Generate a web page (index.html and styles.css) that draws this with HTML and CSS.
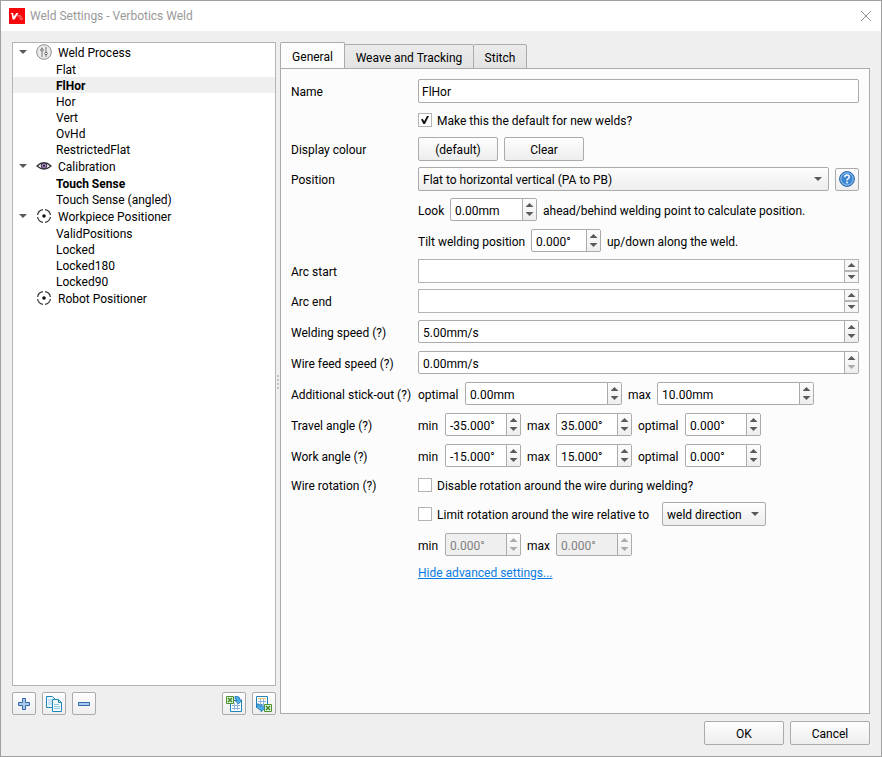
FILE: index.html
```
<!DOCTYPE html>
<html lang="en">
<head>
    <meta charset="UTF-8">
    <meta name="viewport" content="width=device-width, initial-scale=1.0">
    <title>Weld Settings - Verbotics Weld</title>
    <link rel="stylesheet" href="styles.css">
</head>
<body>
    <header class="titlebar">
        <svg class="app-icon" width="16" height="16" viewBox="0 0 16 16">
            <rect width="16" height="16" fill="#f5080c"/>
            <path d="M1.500 5h2.500l.8 3.500L7.500 5h2L5.500 11.500H3.500L2.800 6.500z" fill="#fff"/>
            <path d="M8 7.500h3.500l1 1.500H9.500zM10 10h3.500v1.500H11" fill="none" stroke="#fb7a7c" stroke-width=".8"/>
        </svg>
        <h1>Weld Settings - Verbotics Weld</h1>
        <button class="close" type="button" aria-label="Close">
            <svg width="12" height="12" viewBox="0 0 12 12"><path d="M1 1l10 10M11 1L1 11" stroke="#8c8c8c" fill="none"/></svg>
        </button>
    </header>

    <main class="content">
        <section class="sidebar">
            <ul class="tree">
                <li class="group"><i class="expander"></i>
                    <svg class="node-icon" width="16" height="16" viewBox="0 0 16 16">
                        <circle cx="8" cy="8" r="7.300" fill="#ececec" stroke="#8a8a8a"/>
                        <path d="M6 3.500v2M6 8v5M10 3v5M10 11v2" stroke="#777" fill="none"/>
                        <circle cx="6" cy="6" r="1.300" fill="#fff" stroke="#666"/>
                        <circle cx="10" cy="9.500" r="1.300" fill="#fff" stroke="#666"/>
                    </svg>Weld Process</li>
                <li>Flat</li>
                <li class="selected bold">FlHor</li>
                <li>Hor</li>
                <li>Vert</li>
                <li>OvHd</li>
                <li>RestrictedFlat</li>
                <li class="group"><i class="expander"></i>
                    <svg class="node-icon" width="16" height="16" viewBox="0 0 16 16">
                        <path d="M1 8Q8 1.500 15 8Q8 14 1 8z" fill="#fff" stroke="#333" stroke-width="1.300"/>
                        <circle cx="8" cy="7.800" r="2.800" fill="#a98bc4" stroke="#3a2b48"/>
                        <circle cx="8" cy="7.800" r="1.100" fill="#222"/>
                    </svg>Calibration</li>
                <li class="bold">Touch Sense</li>
                <li>Touch Sense (angled)</li>
                <li class="group"><i class="expander"></i>
                    <svg class="node-icon" width="16" height="16" viewBox="0 0 16 16">
                        <path d="M7 1.600A6.400 6.400 0 0 0 1.600 7M1.600 9A6.400 6.400 0 0 0 7 14.400M9 14.400A6.400 6.400 0 0 0 14.400 9M14.400 7A6.400 6.400 0 0 0 9 1.600" fill="none" stroke="#333" stroke-width="1.200"/>
                        <circle cx="8" cy="8" r="1.800" fill="#111"/>
                    </svg>Workpiece Positioner</li>
                <li>ValidPositions</li>
                <li>Locked</li>
                <li>Locked180</li>
                <li>Locked90</li>
                <li class="group leaf">
                    <svg class="node-icon" width="16" height="16" viewBox="0 0 16 16">
                        <path d="M7 1.600A6.400 6.400 0 0 0 1.600 7M1.600 9A6.400 6.400 0 0 0 7 14.400M9 14.400A6.400 6.400 0 0 0 14.400 9M14.400 7A6.400 6.400 0 0 0 9 1.600" fill="none" stroke="#333" stroke-width="1.200"/>
                        <circle cx="8" cy="8" r="1.800" fill="#111"/>
                    </svg>Robot Positioner</li>
            </ul>
            <div class="tree-tools">
                <button class="tool" type="button" aria-label="Add">
                    <svg width="16" height="16" viewBox="0 0 16 16"><path d="M6.500 2.500h3v4h4v3h-4v4h-3v-4h-4v-3h4z" fill="#a9c9ec" stroke="#3566ae"/></svg>
                </button>
                <button class="tool" type="button" aria-label="Duplicate">
                    <svg width="16" height="16" viewBox="0 0 16 16">
                        <path d="M.5.5h6l3 3v8h-9z" fill="#e8f5fb" stroke="#1f86b8"/>
                        <path d="M2 4h4M2 6h6M2 8h6" stroke="#a5d3e8"/>
                        <path d="M6.500 3.500h6l3 3v9h-9z" fill="#f3fafd" stroke="#1f86b8"/>
                        <path d="M12.500 3.500v3h3" fill="none" stroke="#1f86b8"/>
                        <path d="M8 8.500h5M8 10.500h6M8 12.500h6" stroke="#8fcbe4"/>
                    </svg>
                </button>
                <button class="tool" type="button" aria-label="Remove">
                    <svg width="16" height="16" viewBox="0 0 16 16"><path d="M2.500 6.500h11v3h-11z" fill="#a9c9ec" stroke="#3566ae"/></svg>
                </button>
                <button class="tool tool-push" type="button" aria-label="Import">
                    <svg width="16" height="16" viewBox="0 0 16 16">
                        <path d="M4.500 4.500h11v11h-11z" fill="#fff" stroke="#1f86b8"/>
                        <path d="M6 9.500h8M6 12.500h8M8.500 7v7M11.500 7v7" stroke="#8db4dc"/>
                        <path d="M.5.500h7v7h-7z" fill="#e5f2dc" stroke="#4d9430"/>
                        <path d="M2 2l4 4M6 2L2 6" stroke="#3f8a25" stroke-width="1.500"/>
                        <path d="M9 .5h2.500Q14 .8 14 4h2l-3.500 4L9 4.500h2Q11 3 9 3z" fill="#4fb0ea" stroke="#1b72ae" stroke-width=".8"/>
                    </svg>
                </button>
                <button class="tool" type="button" aria-label="Export">
                    <svg width="16" height="16" viewBox="0 0 16 16">
                        <path d="M.5.500h11v11H.5z" fill="#fff" stroke="#1f86b8"/>
                        <path d="M2 2.500h8" stroke="#efc060"/>
                        <path d="M2 5.500h8M2 8.500h8M4.500 3v7M7.500 3v7" stroke="#8db4dc"/>
                        <path d="M8.500 8.500h7v7h-7z" fill="#e5f2dc" stroke="#4d9430"/>
                        <path d="M10 10l4 4M14 10l-4 4" stroke="#3f8a25" stroke-width="1.500"/>
                        <path d="M.5 8h2.500q0 2.500 2 2.500v-2l4 3.800-4 3.500v-2Q.5 13.500.5 8z" fill="#4fb0ea" stroke="#1b72ae" stroke-width=".8"/>
                    </svg>
                </button>
            </div>
        </section>

        <div class="splitter"></div>

        <section class="settings">
            <div class="tabs" role="tablist">
                <button class="tab tab-general active" type="button" role="tab" aria-selected="true">General</button>
                <button class="tab tab-weave" type="button" role="tab">Weave and Tracking</button>
                <button class="tab tab-stitch" type="button" role="tab">Stitch</button>
            </div>

            <form class="panel">
                <label for="name">Name</label>
                <div class="row"><input class="field grow" id="name" type="text" value="FlHor"></div>

                <div class="row row-check second">
                    <label class="check"><input type="checkbox" checked><span>Make this the default for new welds?</span></label>
                </div>

                <span>Display colour</span>
                <div class="row">
                    <button class="btn" type="button">(default)</button>
                    <button class="btn" type="button">Clear</button>
                </div>

                <label for="position">Position</label>
                <div class="row">
                    <div class="select grow">
                        <select id="position"><option>Flat to horizontal vertical (PA to PB)</option></select>
                    </div>
                    <button class="tool" type="button" aria-label="Help">
                        <svg width="16" height="16" viewBox="0 0 16 16">
                            <circle cx="8" cy="8" r="7.400" fill="#3d87d2" stroke="#2463ae"/>
                            <circle cx="8" cy="8" r="6.200" fill="none" stroke="#b5d5f2" stroke-width=".8"/>
                            <path d="M5.800 6.200Q5.800 4 8 4t2.200 2Q10.200 7.200 8.900 7.900 8 8.400 8 9.500" fill="none" stroke="#fff" stroke-width="1.500"/>
                            <rect x="7.200" y="10.700" width="1.600" height="1.600" fill="#fff"/>
                        </svg>
                    </button>
                </div>

                <div class="row row-spin second">
                    <label class="w-look" for="look">Look</label>
                    <div class="spin spin-look"><input id="look" type="text" value="0.00mm"><div class="steps"><button class="up" type="button" aria-label="Increase"></button><button class="down" type="button" aria-label="Decrease"></button></div></div>
                    <span>ahead/behind welding point to calculate position.</span>
                </div>

                <div class="row row-spin second">
                    <label class="w-tilt" for="tilt">Tilt welding position</label>
                    <div class="spin spin-tilt"><input id="tilt" type="text" value="0.000°"><div class="steps"><button class="up" type="button" aria-label="Increase"></button><button class="down" type="button" aria-label="Decrease"></button></div></div>
                    <span>up/down along the weld.</span>
                </div>

                <label for="arc-start">Arc start</label>
                <div class="row"><div class="memo"><textarea id="arc-start" rows="1"></textarea><div class="scroll"><button class="up" type="button" aria-label="Scroll up"></button><button class="down" type="button" aria-label="Scroll down"></button></div></div></div>

                <label for="arc-end">Arc end</label>
                <div class="row"><div class="memo"><textarea id="arc-end" rows="1"></textarea><div class="scroll"><button class="up" type="button" aria-label="Scroll up"></button><button class="down" type="button" aria-label="Scroll down"></button></div></div></div>

                <label for="speed">Welding speed (?)</label>
                <div class="row row-spin"><div class="spin grow"><input id="speed" type="text" value="5.00mm/s"><div class="steps"><button class="up" type="button" aria-label="Increase"></button><button class="down" type="button" aria-label="Decrease"></button></div></div></div>

                <label for="feed">Wire feed speed (?)</label>
                <div class="row row-spin"><div class="spin grow"><input id="feed" type="text" value="0.00mm/s"><div class="steps"><button class="up" type="button" aria-label="Increase"></button><button class="down" type="button" aria-label="Decrease" disabled></button></div></div></div>

                <span>Additional stick-out (?)</span>
                <div class="row row-spin">
                    <label class="w-optimal" for="stick-opt">optimal</label>
                    <div class="spin spin-wide"><input id="stick-opt" type="text" value="0.00mm"><div class="steps"><button class="up" type="button" aria-label="Increase"></button><button class="down" type="button" aria-label="Decrease"></button></div></div>
                    <label class="w-max" for="stick-max">max</label>
                    <div class="spin spin-wide"><input id="stick-max" type="text" value="10.00mm"><div class="steps"><button class="up" type="button" aria-label="Increase"></button><button class="down" type="button" aria-label="Decrease"></button></div></div>
                </div>

                <span>Travel angle (?)</span>
                <div class="row row-spin">
                    <label class="w-min" for="travel-min">min</label>
                    <div class="spin"><input id="travel-min" type="text" value="-35.000°"><div class="steps"><button class="up" type="button" aria-label="Increase"></button><button class="down" type="button" aria-label="Decrease"></button></div></div>
                    <label class="w-max" for="travel-max">max</label>
                    <div class="spin"><input id="travel-max" type="text" value="35.000°"><div class="steps"><button class="up" type="button" aria-label="Increase"></button><button class="down" type="button" aria-label="Decrease"></button></div></div>
                    <label class="w-optimal" for="travel-opt">optimal</label>
                    <div class="spin"><input id="travel-opt" type="text" value="0.000°"><div class="steps"><button class="up" type="button" aria-label="Increase"></button><button class="down" type="button" aria-label="Decrease"></button></div></div>
                </div>

                <span>Work angle (?)</span>
                <div class="row row-spin">
                    <label class="w-min" for="work-min">min</label>
                    <div class="spin"><input id="work-min" type="text" value="-15.000°"><div class="steps"><button class="up" type="button" aria-label="Increase"></button><button class="down" type="button" aria-label="Decrease"></button></div></div>
                    <label class="w-max" for="work-max">max</label>
                    <div class="spin"><input id="work-max" type="text" value="15.000°"><div class="steps"><button class="up" type="button" aria-label="Increase"></button><button class="down" type="button" aria-label="Decrease"></button></div></div>
                    <label class="w-optimal" for="work-opt">optimal</label>
                    <div class="spin"><input id="work-opt" type="text" value="0.000°"><div class="steps"><button class="up" type="button" aria-label="Increase"></button><button class="down" type="button" aria-label="Decrease"></button></div></div>
                </div>

                <span>Wire rotation (?)</span>
                <div class="row row-check">
                    <label class="check"><input type="checkbox"><span>Disable rotation around the wire during welding?</span></label>
                </div>

                <div class="row second">
                    <label class="check w-limit"><input type="checkbox"><span>Limit rotation around the wire relative to</span></label>
                    <div class="select select-small">
                        <select aria-label="Relative to"><option>weld direction</option></select>
                    </div>
                </div>

                <div class="row row-spin second">
                    <label class="w-min" for="rot-min">min</label>
                    <div class="spin disabled"><input id="rot-min" type="text" value="0.000°" disabled><div class="steps"><button class="up" type="button" aria-label="Increase" disabled></button><button class="down" type="button" aria-label="Decrease" disabled></button></div></div>
                    <label class="w-max" for="rot-max">max</label>
                    <div class="spin disabled"><input id="rot-max" type="text" value="0.000°" disabled><div class="steps"><button class="up" type="button" aria-label="Increase" disabled></button><button class="down" type="button" aria-label="Decrease" disabled></button></div></div>
                </div>

                <div class="row second"><a href="#">Hide advanced settings...</a></div>
            </form>
        </section>
    </main>

    <footer class="actions">
        <button class="btn" type="button">OK</button>
        <button class="btn" type="button">Cancel</button>
    </footer>
</body>
</html>
```
FILE: styles.css
```
* {
    box-sizing: border-box;
}
body {
    margin: 0;
    min-height: 100vh;
    display: flex;
    flex-direction: column;
    border: 1px solid #a0a0a0;
    background-color: #efefef;
    color: #000;
    font-family: Roboto, "Open Sans", sans-serif;
    font-size: 12px;
    line-height: 16px;
    white-space: nowrap;
}
button, input, select, textarea {
    margin: 0;
    padding: 0;
    border: 0;
    font: inherit;
    color: inherit;
}
button svg {
    display: block;
}

/* title bar */
.titlebar {
    display: flex;
    align-items: center;
    height: 30px;
    padding: 0 9px 0 8px;
    background-color: #fff;
}
.titlebar h1 {
    flex: 1;
    margin: 0 0 0 5px;
    font-size: 12px;
    font-weight: normal;
    color: #999;
}
.close {
    background: none;
}

.content {
    flex: 1;
    display: flex;
    padding: 11px 11px 0;
}

/* tree */
.sidebar {
    width: 264px;
    display: flex;
    flex-direction: column;
}
.tree {
    flex: 1;
    margin: 0;
    padding: 0;
    list-style: none;
    background-color: #fff;
    border: 1px solid #b4b4b4;
}
.tree li {
    height: 16px;
    line-height: 18px;
    padding-left: 43px;
}
.tree .group {
    display: flex;
    height: 18px;
    line-height: 20px;
    padding-left: 6px;
}
.tree .leaf {
    padding-left: 23px;
}
.tree .selected {
    background-color: #efefef;
}
.tree .bold {
    font-weight: bold;
}
.expander {
    align-self: center;
    width: 8px;
    height: 4px;
    margin-right: 9px;
    background-color: #5a5a5a;
    clip-path: polygon(0 0, 100% 0, 50% 100%);
}
.node-icon {
    align-self: center;
    margin-right: 6px;
}
.tree-tools {
    display: flex;
    gap: 6px;
    padding: 6px 0;
    height: 35px;
}
.tool {
    display: flex;
    align-items: center;
    justify-content: center;
    width: 24px;
    height: 23px;
    background: linear-gradient(#fefefe, #eee);
    border: 1px solid #ababab;
    border-radius: 2px;
}
.tool-push {
    margin-left: auto;
}
.splitter {
    width: 4px;
    align-self: center;
    height: 16px;
    background: radial-gradient(circle, #c4c4c4 1px, transparent 1px) 0 0 / 4px 4px;
}

/* tabs */
.settings {
    flex: 1;
    display: flex;
    flex-direction: column;
    padding-bottom: 7px;
}
.tabs {
    display: flex;
    align-items: flex-end;
    height: 27px;
    margin-bottom: -1px;
}
.tab {
    height: 25px;
    margin-left: -1px;
    padding-top: 2px;
    background: linear-gradient(#ebebeb, #e3e3e3);
    border: 1px solid #ababab;
    border-radius: 2px 2px 0 0;
}
.tab.active {
    height: 27px;
    margin-left: 0;
    background: #fcfcfc;
    border-bottom-color: #fcfcfc;
}
.tab-general {
    width: 65px;
}
.tab-weave {
    width: 130px;
}
.tab-stitch {
    width: 54px;
}
.panel {
    flex: 1;
    display: grid;
    grid-template-columns: 121px 1fr;
    column-gap: 6px;
    row-gap: 6px;
    align-content: start;
    align-items: center;
    padding: 10px;
    background-color: #fcfcfc;
    border: 1px solid #ababab;
}
.panel span, .panel label:not(.check), .panel a {
    padding-top: 2px;
}

/* form rows */
.row {
    display: flex;
    align-items: center;
    gap: 6px;
}
.row-check {
    height: 22px;
}
.row-spin {
    height: 25px;
}
.second {
    grid-column: 2;
}
.grow {
    flex: 1;
}
.field {
    height: 24px;
    padding: 2px 3px 0;
    background-color: #fff;
    border: 1px solid #ababab;
    border-radius: 2px;
}
.btn {
    width: 80px;
    height: 24px;
    padding-top: 2px;
    background: linear-gradient(#fefefe, #ededed);
    border: 1px solid #ababab;
    border-radius: 2px;
}
.check {
    display: flex;
    align-items: center;
    gap: 5px;
}
.check input {
    appearance: none;
    display: grid;
    place-items: center;
    width: 14px;
    height: 14px;
    background-color: #fff;
    border: 1px solid #b4b4b4;
}
.check input:checked::after {
    content: "";
    width: 8px;
    height: 8px;
    background-color: #111;
    clip-path: polygon(0 45%, 20% 35%, 40% 65%, 75% 0, 100% 0, 50% 100%, 30% 100%);
}
.select {
    position: relative;
}
.select-small {
    width: 104px;
}
.select select {
    appearance: none;
    display: block;
    width: 100%;
    height: 24px;
    padding: 2px 22px 0 4px;
    background: linear-gradient(#fefefe, #ededed);
    border: 1px solid #ababab;
    border-radius: 2px;
}
.select::after {
    content: "";
    position: absolute;
    top: 10px;
    right: 7px;
    width: 8px;
    height: 4px;
    background-color: #5a5a5a;
    clip-path: polygon(0 0, 100% 0, 50% 100%);
    pointer-events: none;
}

/* spin boxes */
.spin {
    display: flex;
    width: 76px;
    height: 23px;
    background-color: #fff;
    border: 1px solid #ababab;
    border-radius: 2px;
    overflow: hidden;
}
.spin.grow {
    width: auto;
}
.spin-look {
    width: 87px;
}
.spin-tilt {
    width: 70px;
}
.spin-wide {
    width: 157px;
}
.spin input {
    flex: 1;
    min-width: 0;
    padding: 2px 0 0 4px;
    background: none;
}
.steps {
    display: flex;
    flex-direction: column;
    justify-content: center;
    width: 14px;
    background: linear-gradient(#fdfdfd, #eee);
    border-left: 1px solid #ababab;
}
.up, .down {
    display: grid;
    place-items: center;
    height: 9px;
    background: none;
}
.up::before, .down::before {
    content: "";
    width: 8px;
    height: 4px;
    background-color: #5a5a5a;
}
.up::before {
    clip-path: polygon(50% 0, 100% 100%, 0 100%);
}
.down::before {
    clip-path: polygon(0 0, 100% 0, 50% 100%);
}
.up:disabled::before, .down:disabled::before {
    background-color: #ababab;
}
.disabled {
    background-color: #efefef;
    color: #808080;
}

/* one-line memo with scroll arrows */
.memo {
    flex: 1;
    display: flex;
    height: 24px;
    background-color: #fff;
    border: 1px solid #b4b4b4;
}
.memo textarea {
    flex: 1;
    resize: none;
    outline: none;
    overflow: hidden;
    background: none;
}
.scroll {
    display: flex;
    flex-direction: column;
    justify-content: space-between;
    width: 14px;
    background-color: #b4b4b4;
    padding-left: 1px;
}
.scroll button {
    height: 10px;
    background-color: #f7f7f7;
}

/* inline label widths */
.w-min {
    width: 21px;
}
.w-max {
    width: 23px;
}
.w-look {
    width: 26px;
}
.w-optimal {
    width: 41px;
}
.w-tilt {
    width: 107px;
}
.w-limit {
    width: 238px;
}
a {
    color: #0a7be0;
}

.actions {
    display: flex;
    justify-content: flex-end;
    gap: 6px;
    padding: 0 11px 11px;
}
```
